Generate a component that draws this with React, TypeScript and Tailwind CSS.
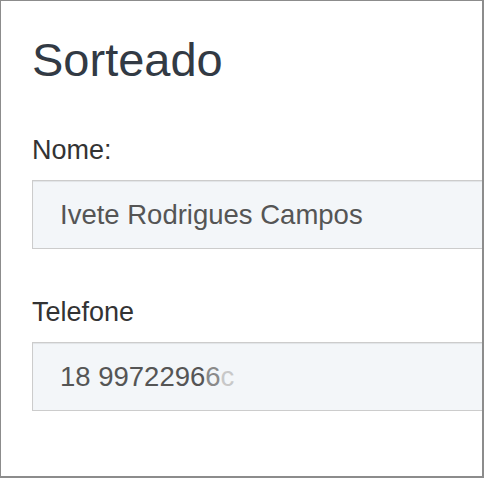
const fieldBox =
    "w-[520px] h-[69px] shrink-0 flex items-center pl-[27px] border border-[#cccccc] bg-[#f3f6f9] shadow-[inset_0_1px_1px_rgba(0,0,0,0.075)] text-[27.5px] leading-none text-[#555555]";

const Label = ({ children }: { children: React.ReactNode }) => (
    <label className="block text-[27px] leading-none text-[#333333]">{children}</label>
);

export default function App() {
    return (
        <div className="w-[484px] h-[478px] overflow-hidden bg-white border-l border-t border-r-2 border-b-2 border-[#8c8c8c] pl-[31px] pt-[35px] flex flex-col font-['Liberation_Sans',Arial,sans-serif]">
            <h1 className="text-[47px] leading-none font-normal text-[#323a44]">Sorteado</h1>

            <div className="mt-[54px]">
                <Label>Nome:</Label>
            </div>
            <div className={`mt-[16px] ${fieldBox}`}>Ivete Rodrigues Campos</div>

            <div className="mt-[50px]">
                <Label>Telefone</Label>
            </div>
            <div className={`mt-[16px] ${fieldBox}`}>
                <span>18 9972296</span>
                <span className="text-[#8a8a8a]">6</span>
                <span className="text-[#c8c8c8]">c</span>
            </div>
        </div>
    );
}
